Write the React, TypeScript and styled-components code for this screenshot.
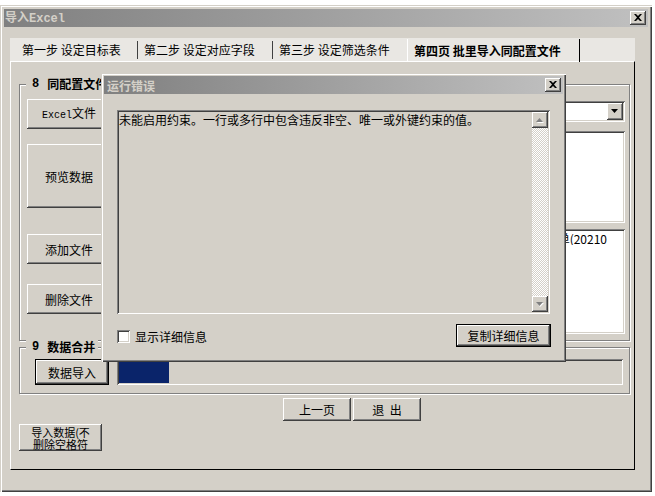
import React from "react"
import styled, { createGlobalStyle } from "styled-components"

const GlobalStyle = createGlobalStyle`
  html, body {
    margin: 0;
    padding: 0;
    background: #ffffff;
  }
  body {
    font-family: "Noto Sans CJK SC", "Noto Sans", sans-serif;
    font-size: 12px;
    line-height: 13px;
    color: #000000;
  }
  * { box-sizing: border-box; }
`

const raised = `
  box-shadow: inset -1px -1px #404040, inset 1px 1px #ffffff,
    inset -2px -2px #808080, inset 2px 2px #d4d0c8;
`
const sunken = `
  box-shadow: inset 1px 1px #808080, inset -1px -1px #ffffff,
    inset 2px 2px #404040, inset -2px -2px #d4d0c8;
`
const frame = `
  box-shadow: inset 1px 1px #d4d0c8, inset 2px 2px #ffffff,
    inset -1px -1px #404040, inset -2px -2px #808080;
`

const Window = styled.div`
  position: relative;
  width: 652px;
  height: 487px;
  margin-top: 5px;
  padding: 4px;
  background: #d4d0c8;
  ${frame}
  display: flex;
  flex-direction: column;
`

const TitleBar = styled.div<{ $pad?: number }>`
  height: 18px;
  flex-shrink: 0;
  display: flex;
  align-items: center;
  justify-content: space-between;
  padding: 0 2px 0 ${p => p.$pad ?? 1}px;
  background: linear-gradient(to right, #808080, #c0c0c0);
  color: #d4d0c8;
  font-weight: bold;
`

const Latin = styled.span<{ $size?: number }>`
  font-family: "Liberation Mono", "Noto Sans CJK SC", monospace;
  font-size: ${p => p.$size ?? 11}px;
`

const CloseBtn = styled.div`
  width: 16px;
  height: 14px;
  background: #d4d0c8;
  ${raised}
  display: flex;
  align-items: center;
  justify-content: center;
  padding-bottom: 1px;
`

const Body = styled.div`
  flex: 1;
  display: flex;
  flex-direction: column;
  padding: 11px 13px 0 6px;
`

const TabStrip = styled.div`
  height: 23px;
  display: flex;
  align-items: stretch;
  background: #e9e7e3;
`

const Tab = styled.div<{ $w: number; $pad: number; $active?: boolean }>`
  width: ${p => p.$w}px;
  padding-left: ${p => p.$pad}px;
  display: flex;
  align-items: center;
  white-space: nowrap;
  font-weight: ${p => (p.$active ? "bold" : "normal")};
  border-left: ${p => (p.$active ? "1px solid #ffffff" : "none")};
  border-right: ${p => (p.$active ? "1px solid #000000" : "none")};
  margin-top: ${p => (p.$active ? "1px" : "0")};
  margin-bottom: ${p => (p.$active ? "-1px" : "0")};
  position: relative;
  z-index: 1;
`

const TabSep = styled.div`
  width: 1px;
  height: 18px;
  align-self: center;
  background: #404040;
`

const Panel = styled.div`
  height: 409px;
  border-top: 1px solid #ffffff;
  border-left: 1px solid #ffffff;
  border-right: 1px solid #000000;
  border-bottom: 1px solid #000000;
  padding: 22px 4px 0 8px;
  display: flex;
  flex-direction: column;
`

const Group = styled.div<{ $h: number; $mt?: number }>`
  position: relative;
  height: ${p => p.$h}px;
  margin-top: ${p => p.$mt ?? 0}px;
  flex-shrink: 0;
  border: 1px solid #808080;
  box-shadow: inset 1px 1px #ffffff, 1px 1px #ffffff;
`

const GroupLabel = styled.span`
  position: absolute;
  top: -8px;
  left: 6px;
  padding: 0 3px 0 6px;
  background: #d4d0c8;
  font-weight: bold;
  line-height: 14px;
  white-space: nowrap;
  display: flex;
  gap: 8px;
`

const FilesRow = styled.div`
  display: flex;
  height: 100%;
  padding: 14px 4px 0 7px;
`

const LeftCol = styled.div`
  width: 84px;
  display: flex;
  flex-direction: column;
`

const Btn = styled.div<{ $w?: number; $h: number; $mt?: number; $def?: boolean; $small?: boolean }>`
  width: ${p => (p.$w ? `${p.$w}px` : "100%")};
  height: ${p => p.$h}px;
  margin-top: ${p => p.$mt ?? 0}px;
  flex-shrink: 0;
  display: flex;
  flex-direction: column;
  align-items: center;
  justify-content: center;
  text-align: center;
  background: #d4d0c8;
  border: ${p => (p.$def ? "1px solid #000000" : "none")};
  ${raised}
  font-size: ${p => (p.$small ? 11 : 12)}px;
  line-height: ${p => (p.$small ? 12 : 13)}px;
  white-space: nowrap;
  overflow: hidden;
`

const RightCol = styled.div`
  margin-left: auto;
  width: 245px;
  padding-top: 2px;
  display: flex;
  flex-direction: column;
`

const Combo = styled.div`
  height: 21px;
  padding: 2px;
  background: #ffffff;
  ${sunken}
  display: flex;
  justify-content: flex-end;
`

const DropBtn = styled.div`
  width: 16px;
  height: 17px;
  background: #d4d0c8;
  ${raised}
  display: flex;
  align-items: center;
  justify-content: center;
`

const ListBox = styled.div<{ $h: number; $mt: number }>`
  height: ${p => p.$h}px;
  margin-top: ${p => p.$mt}px;
  padding: 2px;
  background: #ffffff;
  ${sunken}
  overflow: hidden;
`

const ListItem = styled.div`
  display: flex;
  justify-content: flex-end;
  padding: 1px 16px 0 0;
  white-space: nowrap;
  overflow: hidden;
`

const MergeRow = styled.div`
  display: flex;
  align-items: flex-start;
  padding: 11px 6px 0 15px;
`

const Progress = styled.div`
  flex: 1;
  height: 26px;
  margin-left: 8px;
  padding: 2px;
  ${sunken}
`

const ProgressFill = styled.div`
  height: 100%;
  background: #0a246a;
`

const NavRow = styled.div`
  display: flex;
  gap: 2px;
  margin-top: 4px;
  padding-left: 264px;
`

const Dialog = styled.div`
  position: absolute;
  left: 101px;
  top: 68px;
  width: 465px;
  height: 289px;
  padding: 3px;
  background: #d4d0c8;
  ${frame}
  display: flex;
  flex-direction: column;
  z-index: 5;
`

const DialogBody = styled.div`
  display: flex;
  flex-direction: column;
  padding: 16px 13px 0 13px;
`

const TextArea = styled.div`
  height: 204px;
  padding: 2px;
  ${sunken}
  display: flex;
`

const Message = styled.div`
  flex: 1;
  padding-top: 1px;
  white-space: nowrap;
`

const ScrollBar = styled.div`
  width: 16px;
  display: flex;
  flex-direction: column;
`

const ScrollBtn = styled.div`
  width: 16px;
  height: 16px;
  background: #d4d0c8;
  ${raised}
  display: flex;
  align-items: center;
  justify-content: center;
`

const ScrollTrack = styled.div`
  flex: 1;
  background-color: #ffffff;
  background-image: conic-gradient(#d4d0c8 25%, #ffffff 0 50%, #d4d0c8 0 75%, #ffffff 0);
  background-size: 2px 2px;
`

const BottomRow = styled.div`
  display: flex;
  align-items: center;
  justify-content: space-between;
  margin-top: 10px;
  margin-right: -1px;
`

const CheckLabel = styled.label`
  display: flex;
  align-items: center;
  gap: 5px;
  padding-top: 1px;
`

const CheckBox = styled.span`
  width: 13px;
  height: 13px;
  background: #ffffff;
  ${sunken}
`

const CloseIcon = () => (
  <svg width="8" height="7" viewBox="0 0 8 7">
    <path d="M0 0h2l2 2 2-2h2L5 3.5 8 7H6L4 5 2 7H0l3-3.5z" fill="#000" />
  </svg>
)

const Arrow = ({ up, disabled }: { up?: boolean; disabled?: boolean }) => (
  <svg width="8" height="5" viewBox="0 0 8 5">
    {disabled && <polygon points={up ? "4,1 8,5 1,5" : "1,1 8,1 4,5"} fill="#ffffff" />}
    <polygon
      points={up ? "3.5,0 7,4 0,4" : "0,0 7,0 3.5,4"}
      fill={disabled ? "#808080" : "#000000"}
    />
  </svg>
)

export default function App() {
  return (
    <>
      <GlobalStyle />
      <Window>
        <TitleBar>
          <span>
            导入<Latin $size={12}>Excel</Latin>
          </span>
          <CloseBtn>
            <CloseIcon />
          </CloseBtn>
        </TitleBar>
        <Body>
          <TabStrip>
            <Tab $w={127} $pad={12}>第一步 设定目标表</Tab>
            <TabSep />
            <Tab $w={134} $pad={6}>第二步 设定对应字段</Tab>
            <TabSep />
            <Tab $w={134} $pad={6}>第三步 设定筛选条件</Tab>
            <Tab $w={173} $pad={6} $active>第四页 批里导入同配置文件</Tab>
          </TabStrip>
          <Panel>
            <Group $h={257}>
              <GroupLabel>
                <Latin $size={12}>8</Latin>
                <span>同配置文件</span>
              </GroupLabel>
              <FilesRow>
                <LeftCol>
                  <Btn $h={30}>
                    <span>
                      <Latin $size={10}>Excel</Latin>文件
                    </span>
                  </Btn>
                  <Btn $h={64} $mt={15}>预览数据</Btn>
                  <Btn $h={30} $mt={26}>添加文件</Btn>
                  <Btn $h={30} $mt={20}>删除文件</Btn>
                </LeftCol>
                <RightCol>
                  <Combo>
                    <DropBtn>
                      <Arrow />
                    </DropBtn>
                  </Combo>
                  <ListBox $h={92} $mt={9} />
                  <ListBox $h={105} $mt={6}>
                    <ListItem>D:\数据\员工清单(20210</ListItem>
                  </ListBox>
                </RightCol>
              </FilesRow>
            </Group>
            <Group $h={47} $mt={6}>
              <GroupLabel>
                <Latin $size={12}>9</Latin>
                <span>数据合并</span>
              </GroupLabel>
              <MergeRow>
                <Btn $w={74} $h={26} $def>数据导入</Btn>
                <Progress>
                  <ProgressFill style={{ width: "10%" }} />
                </Progress>
              </MergeRow>
            </Group>
            <NavRow>
              <Btn $w={68} $h={23}>上一页</Btn>
              <Btn $w={68} $h={23}>退&nbsp;&nbsp;出</Btn>
            </NavRow>
            <Btn $w={83} $h={27} $mt={3} $small>
              <span>
                导入数据(不
                <br />
                删除空格符
              </span>
            </Btn>
          </Panel>
        </Body>
        <Dialog>
          <TitleBar $pad={3}>
            <span>运行错误</span>
            <CloseBtn>
              <CloseIcon />
            </CloseBtn>
          </TitleBar>
          <DialogBody>
            <TextArea>
              <Message>未能启用约束。一行或多行中包含违反非空、唯一或外键约束的值。</Message>
              <ScrollBar>
                <ScrollBtn>
                  <Arrow up disabled />
                </ScrollBtn>
                <ScrollTrack />
                <ScrollBtn>
                  <Arrow disabled />
                </ScrollBtn>
              </ScrollBar>
            </TextArea>
            <BottomRow>
              <CheckLabel>
                <CheckBox />
                显示详细信息
              </CheckLabel>
              <Btn $w={95} $h={23} $def>复制详细信息</Btn>
            </BottomRow>
          </DialogBody>
        </Dialog>
      </Window>
    </>
  )
}
